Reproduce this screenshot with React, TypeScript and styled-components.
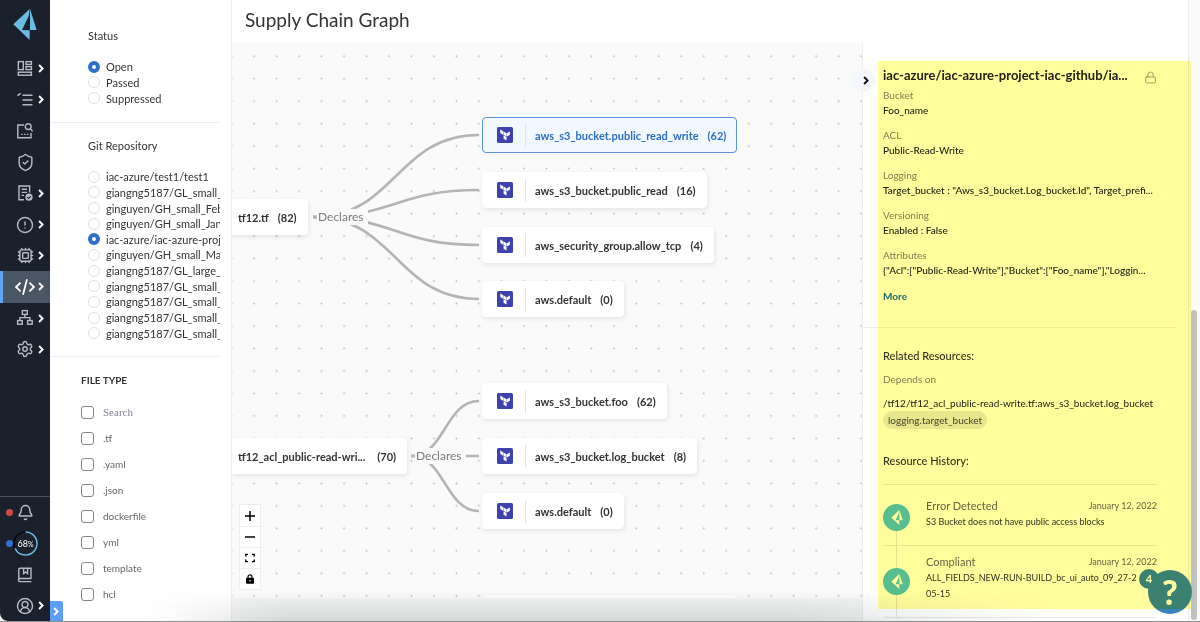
import React from "react";
import styled, { createGlobalStyle } from "styled-components";
import { Bell, CircleAlert, CircleUserRound, Cpu, Lock, Settings, ShieldCheck } from "lucide-react";

const GlobalStyle = createGlobalStyle`
  *, *::before, *::after { box-sizing: border-box; }
  body {
    margin: 0;
    background: #fff;
    color: #333;
    font-family: Lato, "Liberation Sans", sans-serif;
    font-size: 11px;
  }
  h1, h2, h3, p, ul, dl, dd, fieldset { margin: 0; padding: 0; }
  ul { list-style: none; }
  button { font: inherit; color: inherit; border: 0; background: none; padding: 0; cursor: pointer; }
`;

const Shell = styled.div`
  position: relative;
  display: grid;
  grid-template-columns: 50px 182px minmax(0, 1fr) 12px;
  height: 100vh;
  overflow: hidden;
  border-bottom: 1px solid #8d908f;
`;

/* ---------- Sidebar ---------- */

const Sidebar = styled.nav`
  display: flex;
  flex-direction: column;
  background: #1b212c;
  border-bottom-left-radius: 8px;
  color: #b3bac5;
`;

const Brand = styled.a`
  display: flex;
  justify-content: center;
  height: 53px;
  padding-top: 9px;
  color: #6bbce2;
`;

const NavList = styled.ul`
  display: grid;
  grid-auto-rows: 1fr;
  height: 312px;
`;

const FooterList = styled.ul`
  display: grid;
  grid-auto-rows: 31px;
  margin-top: auto;
  border-top: 1px solid #4a505a;
`;

const NavButton = styled.button<{ $active?: boolean }>`
  position: relative;
  display: grid;
  grid-template-columns: 18px 8px;
  align-items: center;
  justify-items: center;
  column-gap: 3px;
  width: 100%;
  height: 100%;
  padding-left: 16px;
  background: ${(p) => (p.$active ? "#4b5665" : "transparent")};
  box-shadow: ${(p) => (p.$active ? "inset 3px 0 #5fa6f8" : "none")};
  color: ${(p) => (p.$active ? "#fff" : "inherit")};
`;

const StatusDot = styled.span<{ $color: string }>`
  position: absolute;
  left: 6px;
  width: 7px;
  height: 7px;
  border-radius: 50%;
  background: ${(p) => p.$color};
`;

const Progress = styled.span`
  position: absolute;
  left: 13px;
  display: grid;
  place-items: center;
  width: 25px;
  height: 25px;
  color: #fff;
  font-size: 9px;
  svg { position: absolute; inset: 0; }
  small { font-size: 7px; }
`;

/* ---------- Filters ---------- */

const Filters = styled.aside`
  position: relative;
  padding-right: 11px;
  border-right: 1px solid #ececec;
  overflow: hidden;
`;

const RadioGroup = styled.fieldset<{ $top: number; $bottom: number }>`
  min-width: 0;
  border: 0;
  border-bottom: 1px solid #efefef;
  padding: ${(p) => p.$top}px 0 ${(p) => p.$bottom}px 38px;
  overflow: hidden;
`;

const GroupTitle = styled.legend`
  float: left;
  width: 100%;
  padding: 0;
  margin-bottom: 15px;
  font-size: 11px;
  line-height: 16px;
`;

const RadioList = styled.div<{ $height: number }>`
  clear: both;
  display: grid;
  grid-auto-rows: 1fr;
  height: ${(p) => p.$height}px;
`;

const RadioLabel = styled.label`
  display: flex;
  align-items: center;
  gap: 6px;
  font-size: 11px;
  line-height: 15px;
  white-space: nowrap;
`;

const Radio = styled.input`
  appearance: none;
  flex: none;
  width: 12px;
  height: 12px;
  margin: 0;
  border: 1px solid #e0e0e0;
  border-radius: 50%;
  background: #fff;
  &:checked { border: 4px solid #2f6fc9; }
`;

const FileTypes = styled.section`
  padding: 15px 0 0 31px;
  h2 {
    font-size: 10px;
    font-weight: 700;
    line-height: 16px;
    margin-bottom: 11px;
  }
`;

const CheckRow = styled.div`
  display: flex;
  align-items: center;
  gap: 9px;
  height: 26px;
  color: #666;
  font-size: 10px;
`;

const Checkbox = styled.input`
  appearance: none;
  flex: none;
  width: 13px;
  height: 13px;
  margin: 0;
  border: 1px solid #858585;
  border-radius: 3px;
  background: #fff;
`;

const SearchInput = styled.input`
  width: 100px;
  border: 0;
  padding: 0;
  outline: 0;
  background: none;
  font-family: "Liberation Serif", serif;
  font-size: 11px;
  &::placeholder { color: #85829a; opacity: 1; }
`;

const ExpandTab = styled.button`
  position: absolute;
  left: 0;
  bottom: 0;
  display: grid;
  place-items: center;
  width: 13px;
  height: 20px;
  border-radius: 0 2px 0 0;
  background: #5a9ff5;
  color: #fff;
`;

/* ---------- Graph ---------- */

const Main = styled.main`
  display: grid;
  grid-template-columns: minmax(0, 1fr) 326px;
  grid-template-rows: 43px minmax(0, 1fr);
`;

const PageTitle = styled.h1`
  grid-column: 1 / -1;
  padding: 8px 0 0 13px;
  font-size: 19px;
  font-weight: 400;
  line-height: 24px;
`;

const GraphColumn = styled.div`
  position: relative;
  display: grid;
  grid-template-rows: minmax(0, 1fr) 23px;
  background: #f4f6f5;
`;

const Canvas = styled.div`
  position: relative;
  overflow: hidden;
  background: #fafafa;
`;

const Drawing = styled.svg`
  position: absolute;
  inset: 0;
  width: 100%;
  height: 100%;
`;

const Node = styled.button<{ $x: number; $y: number; $selected?: boolean }>`
  position: absolute;
  left: ${(p) => p.$x}px;
  top: ${(p) => p.$y}px;
  display: flex;
  align-items: center;
  height: 36px;
  padding: 0 10px 0 14px;
  border: 1px solid ${(p) => (p.$selected ? "#5b94dc" : "#fff")};
  border-radius: 4px;
  background: ${(p) => (p.$selected ? "#f2f8ff" : "#fff")};
  box-shadow: ${(p) => (p.$selected ? "none" : "1px 2px 5px rgba(0, 0, 0, 0.09)")};
  color: ${(p) => (p.$selected ? "#2b6fc8" : "#333")};
  font-size: 11px;
  font-weight: 700;
  white-space: nowrap;
`;

const FileNode = styled(Node)`
  border-left: 0;
  border-radius: 0 4px 4px 0;
  padding-left: 6px;
`;

const NodeIcon = styled.span`
  padding-right: 12px;
  margin-right: 9px;
  border-right: 1px solid #e3e3e3;
  height: 23px;
  display: flex;
  align-items: center;
`;

const NodeCount = styled.span<{ $gap?: number }>`
  margin-left: ${(p) => p.$gap ?? 9}px;
`;

const EdgeLabel = styled.span<{ $x: number; $y: number }>`
  position: absolute;
  left: ${(p) => p.$x}px;
  top: ${(p) => p.$y}px;
  padding: 0 4px 0 1px;
  background: #fafafa;
  color: #7b7b7b;
  font-size: 12px;
  line-height: 16px;
`;

const Controls = styled.div`
  position: absolute;
  left: 7px;
  bottom: 8px;
  display: grid;
  grid-auto-rows: 21px;
  width: 22px;
  background: #fff;
  border: 1px solid #eee;
  color: #000;
  button { display: grid; place-items: center; }
  button + button { border-top: 1px solid #eee; }
`;

const CollapseButton = styled.button`
  position: absolute;
  z-index: 1;
  right: -13px;
  top: 26px;
  display: grid;
  place-items: center;
  width: 23px;
  height: 23px;
  padding-left: 5px;
  border-radius: 50%;
  background: #f5f7fe;
  color: #111;
`;

/* ---------- Details ---------- */

const Details = styled.aside`
  border-left: 1px solid #ececec;
  background: #fff;
  overflow: hidden;
`;

const Summary = styled.section`
  margin-right: 11px;
  padding: 23px 20px 23px 20px;
  border-bottom: 1px solid #eee;
`;

const SummaryHead = styled.header`
  display: flex;
  justify-content: space-between;
  align-items: end;
  margin-bottom: 4px;
  color: #a0a0a0;
  h2 {
    color: #222;
    font-size: 13px;
    font-weight: 700;
    line-height: 18px;
    white-space: nowrap;
  }
`;

const Fields = styled.dl`
  display: grid;
  gap: 10px;
  margin-bottom: 10px;
  font-size: 10px;
  line-height: 15px;
  white-space: nowrap;
  dt { color: #808080; }
  dd { color: #222; font-weight: 500; }
`;

const MoreLink = styled.a`
  display: block;
  color: #1f6db0;
  font-size: 10px;
  font-weight: 700;
  line-height: 16px;
  text-decoration: none;
`;

const Related = styled.section`
  padding: 20px 31px 0 20px;
  font-size: 10px;
  line-height: 15px;
`;

const SectionTitle = styled.h3`
  color: #333;
  font-size: 11px;
  font-weight: 500;
  line-height: 16px;
`;

const Muted = styled.p`
  margin: 8px 0;
  color: #808080;
`;

const ResourcePath = styled.p`
  color: #222;
  line-height: 16px;
  white-space: nowrap;
`;

const Pill = styled.span`
  display: inline-block;
  padding: 0 5px;
  margin-bottom: 24px;
  border-radius: 9px;
  background: #e9e9e9;
  color: #444;
  line-height: 18px;
`;

const Timeline = styled.ol`
  list-style: none;
  margin: 15px 0 0;
  padding: 5px 0 0;
  border-top: 1px solid #e8e8e8;
`;

const Event = styled.li`
  display: grid;
  grid-template-columns: 27px minmax(0, 1fr);
  column-gap: 16px;
  border-bottom: 1px solid #e8e8e8;
`;

const Rail = styled.div<{ $first?: boolean }>`
  display: grid;
  align-items: center;
  background: linear-gradient(#e4e4e4, #e4e4e4) 50% 100% / 1px ${(p) => (p.$first ? "50%" : "100%")} no-repeat;
`;

const EventMark = styled.span`
  display: grid;
  place-items: center;
  width: 27px;
  height: 27px;
  border-radius: 50%;
  background: #56c0ea;
  color: #fff;
`;

const EventBody = styled.div`
  padding: 8px 0 15px;
  color: #333;
  font-size: 9px;
  line-height: 16px;
  white-space: pre-line;
`;

const EventHead = styled.div`
  display: flex;
  justify-content: space-between;
  color: #666;
  h4 { margin: 0; font-size: 11px; font-weight: 400; }
`;

/* ---------- Overlays ---------- */

const ScrollTrack = styled.div`
  display: flex;
  flex-direction: column;
  justify-content: flex-end;
  padding: 0 3px 1px 2px;
  border-left: 1px solid #ececec;
  background: #fafafa;
`;

const ScrollThumb = styled.div`
  height: 50%;
  border-radius: 3px;
  background: #c1c1c1;
`;

const BottomShade = styled.div`
  position: absolute;
  left: 0;
  right: 0;
  bottom: 0;
  height: 30px;
  pointer-events: none;
  background: linear-gradient(rgba(50, 65, 60, 0), rgba(50, 65, 60, 0.16));
  mask-image: linear-gradient(to right, transparent 12%, #000 24%, #000 66%, transparent 88%);
`;

const HelpButton = styled.button`
  position: absolute;
  right: 8px;
  bottom: 7px;
  width: 44px;
  height: 44px;
  border-radius: 50%;
  background: #3a82bb;
  color: #fff;
  font-size: 34px;
  font-weight: 900;
  line-height: 44px;
`;

const HelpBadge = styled.span`
  position: absolute;
  left: -9px;
  top: -1px;
  width: 20px;
  height: 20px;
  border-radius: 50%;
  background: #3a82bb;
  font-size: 11px;
  font-weight: 700;
  line-height: 20px;
`;

const Highlight = styled.div`
  position: absolute;
  right: 9px;
  top: 61px;
  bottom: 12px;
  width: 313px;
  background: #fffd9c;
  mix-blend-mode: multiply;
  pointer-events: none;
`;

/* ---------- Icons ---------- */

const Logo = ({ width, height }: { width: number; height: number }) => (
  <svg width={width} height={height} viewBox="0 0 70 93" fill="currentColor" aria-hidden="true">
    <path d="M49 0 L0 46 L49 93 L49 64 L26 63 L46 22 Z" />
    <path d="M50 0 L70 63 L50 63 Z" />
  </svg>
);

const Chevron = ({ size = 9 }: { size?: number }) => (
  <svg width={size} height={size} viewBox="0 0 9 9" fill="none" stroke="currentColor" strokeWidth="1.9" aria-hidden="true">
    <path d="M2.1 1 L5.6 4.5 L2.1 8" />
  </svg>
);

const Glyph = ({ children, size = 18, width = 1.4 }: { children: React.ReactNode; size?: number; width?: number }) => (
  <svg width={size} height={size} viewBox="0 0 18 18" fill="none" stroke="currentColor" strokeWidth={width} aria-hidden="true">
    {children}
  </svg>
);

const DashboardIcon = () => (
  <Glyph>
    <rect x="2.3" y="1.6" width="5" height="8" />
    <rect x="10" y="1.6" width="5.4" height="2.8" />
    <rect x="10" y="6.6" width="5.4" height="3" />
    <rect x="2.3" y="12.2" width="13.1" height="3" />
  </Glyph>
);

const ListIcon = () => (
  <Glyph>
    <path d="M1.4 4.6 L4.8 2.4 M6.5 4.2 H16.5 M6.5 9 H16.5 M6.5 13.8 H16.5" />
  </Glyph>
);

const InspectIcon = () => (
  <Glyph>
    <path d="M8 3 H1.8 V15.8 H15 V11" />
    <circle cx="12.2" cy="4.6" r="2.9" />
    <path d="M14.2 6.8 L16.6 9.2" />
    <path d="M5 12.4 H12.5" strokeDasharray="1.5 1.4" />
  </Glyph>
);

const ReportIcon = () => (
  <Glyph>
    <path d="M8 15.8 H3 V2 H13.6 V8.5 M5.6 5.3 H11 M5.6 8.4 H11 M5.6 11.4 H8" />
    <circle cx="13" cy="13.2" r="3.6" fill="currentColor" stroke="none" />
    <path d="M11.2 13.2 L12.6 14.5 L14.9 12" stroke="#1b212c" strokeWidth="1.1" />
  </Glyph>
);

const CodeIcon = () => (
  <Glyph size={20} width={1.6}>
    <path d="M5 5 L1 9 L5 13 M13 5 L17 9 L13 13 M10.8 2 L7.2 16" />
  </Glyph>
);

const NetworkIcon = () => (
  <Glyph>
    <rect x="6.3" y="1.6" width="5" height="3.8" />
    <rect x="1.6" y="11.6" width="4.6" height="3.6" />
    <rect x="11.6" y="11.6" width="4.6" height="3.6" />
    <path d="M8.9 5.4 V8.6 M3.9 11.6 V8.6 H13.9 V11.6" />
  </Glyph>
);

const BookIcon = () => (
  <Glyph>
    <path d="M15.4 12.5 H4 A1.4 1.4 0 0 0 4 15.6 H15.4 M2.8 14 V3.4 A1.2 1.2 0 0 1 4 2.2 H15 V12.5 M7.6 2.2 V7.6 L9.6 6 L11.6 7.6 V2.2" />
  </Glyph>
);

const TerraformIcon = () => (
  <svg width="16" height="16" viewBox="0 0 16 16" aria-hidden="true">
    <rect width="16" height="16" rx="1.6" fill="#3e42ad" />
    <g transform="translate(2.6 2.5) scale(0.455)" fill="#fff">
      <path d="M1.44 0v7.575l6.561 3.79V3.787zm21.12 4.227l-6.561 3.791v7.574l6.56-3.787zM8.72 4.23v7.575l6.561 3.787V8.018zm0 8.405v7.575L15.28 24v-7.578z" />
    </g>
  </svg>
);

/* ---------- Data ---------- */

const navItems = [
  { label: "Dashboards", icon: <DashboardIcon />, more: true },
  { label: "Policies", icon: <ListIcon />, more: true },
  { label: "Investigate", icon: <InspectIcon /> },
  { label: "Governance", icon: <ShieldCheck size={19} strokeWidth={1.8} /> },
  { label: "Compliance", icon: <ReportIcon />, more: true },
  { label: "Alerts", icon: <CircleAlert size={18} strokeWidth={1.9} />, more: true },
  { label: "Compute", icon: <Cpu size={17} strokeWidth={2} />, more: true },
  { label: "Code security", icon: <CodeIcon />, more: true, active: true },
  { label: "Network", icon: <NetworkIcon />, more: true },
  { label: "Settings", icon: <Settings size={18} strokeWidth={1.9} />, more: true },
];

const statuses = ["Open", "Passed", "Suppressed"];

const repositories = [
  "iac-azure/test1/test1",
  "giangng5187/GL_small_1",
  "ginguyen/GH_small_Feb",
  "ginguyen/GH_small_Jan",
  "iac-azure/iac-azure-project",
  "ginguyen/GH_small_Mar",
  "giangng5187/GL_large_1",
  "giangng5187/GL_small_2",
  "giangng5187/GL_small_3",
  "giangng5187/GL_small_4",
  "giangng5187/GL_small_5",
];

const fileTypes = [".tf", ".yaml", ".json", "dockerfile", "yml", "template", "hcl"];

const nodes = [
  { name: "aws_s3_bucket.public_read_write", count: 62, y: 74, selected: true },
  { name: "aws_s3_bucket.public_read", count: 16, y: 129 },
  { name: "aws_security_group.allow_tcp", count: 4, y: 184 },
  { name: "aws.default", count: 0, y: 238 },
  { name: "aws_s3_bucket.foo", count: 62, y: 340 },
  { name: "aws_s3_bucket.log_bucket", count: 8, y: 395 },
  { name: "aws.default", count: 0, y: 450 },
  { name: "aws_s3_bucket.public_read_write", count: 62, y: 552 },
];

const edges = [
  "M81 174 C164 174 164 92 247 92",
  "M81 174 C164 174 164 147 247 147",
  "M81 174 C164 174 164 202 247 202",
  "M81 174 C164 174 164 256 247 256",
  "M179 413 C213 413 213 358 247 358",
  "M179 413 H247",
  "M179 413 C213 413 213 468 247 468",
];

const fields = [
  ["Bucket", "Foo_name"],
  ["ACL", "Public-Read-Write"],
  ["Logging", 'Target_bucket : "Aws_s3_bucket.Log_bucket.Id", Target_prefi...'],
  ["Versioning", "Enabled : False"],
  ["Attributes", '{"Acl":["Public-Read-Write"],"Bucket":["Foo_name"],"Loggin...'],
];

const events = [
  { title: "Error Detected", date: "January 12, 2022", text: "S3 Bucket does not have public access blocks" },
  { title: "Compliant", date: "January 12, 2022", text: "ALL_FIELDS_NEW-RUN-BUILD_bc_ui_auto_09_27-2\n05-15" },
];

export default function App() {
  return (
    <>
      <GlobalStyle />
      <Shell>
        <Sidebar aria-label="Main">
          <Brand href="#" aria-label="Home">
            <Logo width={24} height={31} />
          </Brand>
          <NavList>
            {navItems.map((item) => (
              <li key={item.label}>
                <NavButton $active={item.active} aria-label={item.label}>
                  {item.icon}
                  {item.more && <Caret />}
                </NavButton>
              </li>
            ))}
          </NavList>
          <FooterList>
            <li>
              <NavButton aria-label="Notifications">
                <StatusDot $color="#cf4a43" />
                <Bell size={17} strokeWidth={2} />
              </NavButton>
            </li>
            <li>
              <NavButton aria-label="Setup progress">
                <StatusDot $color="#2f6fd0" />
                <Progress>
                  <svg width="25" height="25" viewBox="0 0 25 25" fill="none" strokeWidth="1.5" aria-hidden="true">
                    <circle cx="12.5" cy="12.5" r="11.5" stroke="#05070a" />
                    <circle cx="12.5" cy="12.5" r="11.5" stroke="#6bbce2" pathLength="100" strokeDasharray="68 32" transform="rotate(-90 12.5 12.5)" />
                  </svg>
                  <span>68<small>%</small></span>
                </Progress>
              </NavButton>
            </li>
            <li>
              <NavButton aria-label="Documentation"><BookIcon /></NavButton>
            </li>
            <li>
              <NavButton aria-label="Profile">
                <CircleUserRound size={18} strokeWidth={1.9} />
                <Caret />
              </NavButton>
            </li>
          </FooterList>
        </Sidebar>

        <Filters>
          <RadioGroup $top={28} $bottom={16}>
            <GroupTitle>Status</GroupTitle>
            <RadioList $height={47}>
              {statuses.map((status) => (
                <RadioLabel key={status}>
                  <Radio type="radio" name="status" defaultChecked={status === "Open"} />
                  {status}
                </RadioLabel>
              ))}
            </RadioList>
          </RadioGroup>
          <RadioGroup $top={15} $bottom={15}>
            <GroupTitle>Git Repository</GroupTitle>
            <RadioList $height={172}>
              {repositories.map((repo, i) => (
                <RadioLabel key={repo}>
                  <Radio type="radio" name="repository" defaultChecked={i === 4} />
                  {repo}
                </RadioLabel>
              ))}
            </RadioList>
          </RadioGroup>
          <FileTypes>
            <h2>FILE TYPE</h2>
            <CheckRow>
              <Checkbox type="checkbox" aria-label="All file types" />
              <SearchInput type="text" placeholder="Search" aria-label="Search file types" />
            </CheckRow>
            {fileTypes.map((type) => (
              <CheckRow as="label" key={type}>
                <Checkbox type="checkbox" />
                {type}
              </CheckRow>
            ))}
          </FileTypes>
          <ExpandTab aria-label="Expand filters"><Chevron /></ExpandTab>
        </Filters>

        <Main>
          <PageTitle>Supply Chain Graph</PageTitle>
          <GraphColumn>
            <Canvas>
              <Drawing aria-hidden="true">
                <defs>
                  <pattern id="dots" x="10.9" y="2" width="22.48" height="22.48" patternUnits="userSpaceOnUse">
                    <circle cx="11.24" cy="11.24" r="0.9" fill="#b8b8b8" />
                  </pattern>
                </defs>
                <rect width="100%" height="100%" fill="url(#dots)" />
                <g fill="none" stroke="#b4b4b4" strokeWidth="2.6">
                  {edges.map((d) => <path key={d} d={d} />)}
                </g>
              </Drawing>
              <EdgeLabel $x={85} $y={166}>Declares</EdgeLabel>
              <EdgeLabel $x={183} $y={405}>Declares</EdgeLabel>
              <FileNode $x={0} $y={156}>
                tf12.tf<NodeCount>(82)</NodeCount>
              </FileNode>
              <FileNode $x={0} $y={395}>
                tf12_acl_public-read-wri...<NodeCount $gap={12}>(70)</NodeCount>
              </FileNode>
              {nodes.map((node) => (
                <Node key={node.y} $x={250} $y={node.y} $selected={node.selected}>
                  <NodeIcon><TerraformIcon /></NodeIcon>
                  {node.name}
                  <NodeCount>({node.count})</NodeCount>
                </Node>
              ))}
              <Controls>
                <button aria-label="Zoom in">
                  <svg width="10" height="10" stroke="currentColor" strokeWidth="1.5"><path d="M5 0V10M0 5H10" /></svg>
                </button>
                <button aria-label="Zoom out">
                  <svg width="10" height="10" stroke="currentColor" strokeWidth="1.5"><path d="M0 5H10" /></svg>
                </button>
                <button aria-label="Fit view">
                  <svg width="10" height="10" fill="none" stroke="currentColor" strokeWidth="1.4">
                    <path d="M0.8 3.4V1.4H3M7 1.4H9.2V3.4M9.2 6.6V8.6H7M3 8.6H0.8V6.6" />
                  </svg>
                </button>
                <button aria-label="Lock">
                  <svg width="8" height="10" viewBox="0 0 8 10">
                    <rect y="3.8" width="8" height="6" rx="0.8" />
                    <path d="M2 4.2V2.8A2 2 0 0 1 6 2.8V4.2" fill="none" stroke="currentColor" strokeWidth="1.2" />
                    <circle cx="4" cy="6.8" r="0.8" fill="#fff" />
                  </svg>
                </button>
              </Controls>
            </Canvas>
            <CollapseButton aria-label="Collapse details"><Chevron /></CollapseButton>
          </GraphColumn>

          <Details>
            <Summary>
              <SummaryHead>
                <h2>iac-azure/iac-azure-project-iac-github/ia...</h2>
                <Lock size={13} strokeWidth={1.8} />
              </SummaryHead>
              <Fields>
                {fields.map(([name, value]) => (
                  <div key={name}>
                    <dt>{name}</dt>
                    <dd>{value}</dd>
                  </div>
                ))}
              </Fields>
              <MoreLink href="#">More</MoreLink>
            </Summary>
            <Related>
              <SectionTitle>Related Resources:</SectionTitle>
              <Muted>Depends on</Muted>
              <ResourcePath>/tf12/tf12_acl_public-read-write.tf:aws_s3_bucket.log_bucket</ResourcePath>
              <Pill>logging.target_bucket</Pill>
              <SectionTitle>Resource History:</SectionTitle>
              <Timeline>
                {events.map((event, i) => (
                  <Event key={event.title}>
                    <Rail $first={i === 0}>
                      <EventMark><Logo width={12} height={15} /></EventMark>
                    </Rail>
                    <EventBody>
                      <EventHead>
                        <h4>{event.title}</h4>
                        <time>{event.date}</time>
                      </EventHead>
                      <p>{event.text}</p>
                    </EventBody>
                  </Event>
                ))}
              </Timeline>
            </Related>
          </Details>
        </Main>

        <ScrollTrack aria-hidden="true"><ScrollThumb /></ScrollTrack>
        <BottomShade />
        <HelpButton aria-label="Help">
          ?<HelpBadge>4</HelpBadge>
        </HelpButton>
        <Highlight />
      </Shell>
    </>
  );
}

const CaretBox = styled.span`
  display: grid;
  color: #fff;
`;

function Caret() {
  return <CaretBox><Chevron /></CaretBox>;
}
